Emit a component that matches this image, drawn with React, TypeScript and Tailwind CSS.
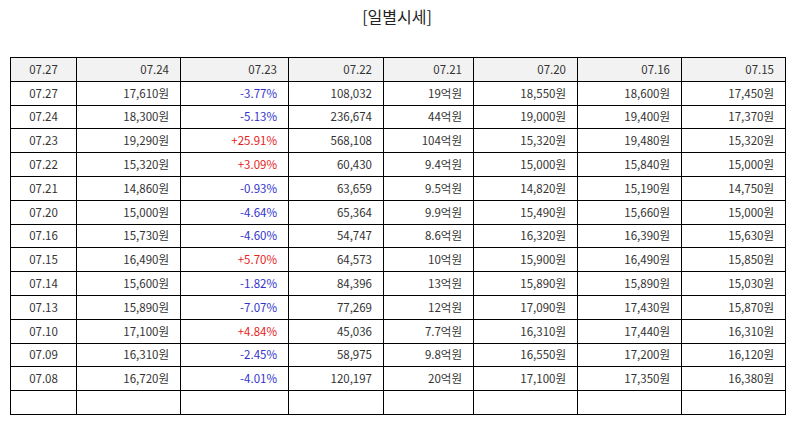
const header = ["07.27", "07.24", "07.23", "07.22", "07.21", "07.20", "07.16", "07.15"];

type Row = [string, string, string, string, string, string, string, string];

const rows: Row[] = [
  ["07.27", "17,610원", "-3.77%", "108,032", "19억원", "18,550원", "18,600원", "17,450원"],
  ["07.24", "18,300원", "-5.13%", "236,674", "44억원", "19,000원", "19,400원", "17,370원"],
  ["07.23", "19,290원", "+25.91%", "568,108", "104억원", "15,320원", "19,480원", "15,320원"],
  ["07.22", "15,320원", "+3.09%", "60,430", "9.4억원", "15,000원", "15,840원", "15,000원"],
  ["07.21", "14,860원", "-0.93%", "63,659", "9.5억원", "14,820원", "15,190원", "14,750원"],
  ["07.20", "15,000원", "-4.64%", "65,364", "9.9억원", "15,490원", "15,660원", "15,000원"],
  ["07.16", "15,730원", "-4.60%", "54,747", "8.6억원", "16,320원", "16,390원", "15,630원"],
  ["07.15", "16,490원", "+5.70%", "64,573", "10억원", "15,900원", "16,490원", "15,850원"],
  ["07.14", "15,600원", "-1.82%", "84,396", "13억원", "15,890원", "15,890원", "15,030원"],
  ["07.13", "15,890원", "-7.07%", "77,269", "12억원", "17,090원", "17,430원", "15,870원"],
  ["07.10", "17,100원", "+4.84%", "45,036", "7.7억원", "16,310원", "17,440원", "16,310원"],
  ["07.09", "16,310원", "-2.45%", "58,975", "9.8억원", "16,550원", "17,200원", "16,120원"],
  ["07.08", "16,720원", "-4.01%", "120,197", "20억원", "17,100원", "17,350원", "16,380원"],
];

const widths = ["w-[66px]", "w-[104px]", "w-[108px]", "w-[95px]", "w-[90px]", "w-[104px]", "w-[104px]", "w-[104px]"];

const changeColor = (v: string) => (v.startsWith("+") ? "text-[#e52222]" : "text-[#3333cc]");

const App = () => {
  return (
    <div className="w-[794px] h-[425px] bg-white text-[#333] font-['Noto_Sans_CJK_KR','Noto_Sans',sans-serif]">
      <div className="pt-[4px] h-[57px] text-center text-[16px] text-[#222]">[일별시세]</div>
      <table className="ml-[10px] w-[775px] table-fixed border-collapse text-[11.5px]">
        <colgroup>
          {widths.map((w, i) => (
            <col key={i} className={w} />
          ))}
        </colgroup>
        <thead>
          <tr className="h-[23.8px] bg-[#f2f2f2]">
            {header.map((h, i) => (
              <th
                key={i}
                className={`border border-black p-0 font-normal ${i === 0 ? "text-center" : "text-right pr-[11px]"}`}
              >
                {h}
              </th>
            ))}
          </tr>
        </thead>
        <tbody>
          {rows.map((r, ri) => (
            <tr key={ri} className="h-[23.8px]">
              {r.map((c, ci) => (
                <td
                  key={ci}
                  className={`border border-black p-0 ${ci === 0 ? "text-center" : "text-right pr-[11px]"} ${
                    ci === 2 ? changeColor(c) : ""
                  }`}
                >
                  {c}
                </td>
              ))}
            </tr>
          ))}
          <tr className="h-[23.8px]">
            {header.map((_, i) => (
              <td key={i} className="border border-black p-0" />
            ))}
          </tr>
        </tbody>
      </table>
    </div>
  );
};

export default App;
